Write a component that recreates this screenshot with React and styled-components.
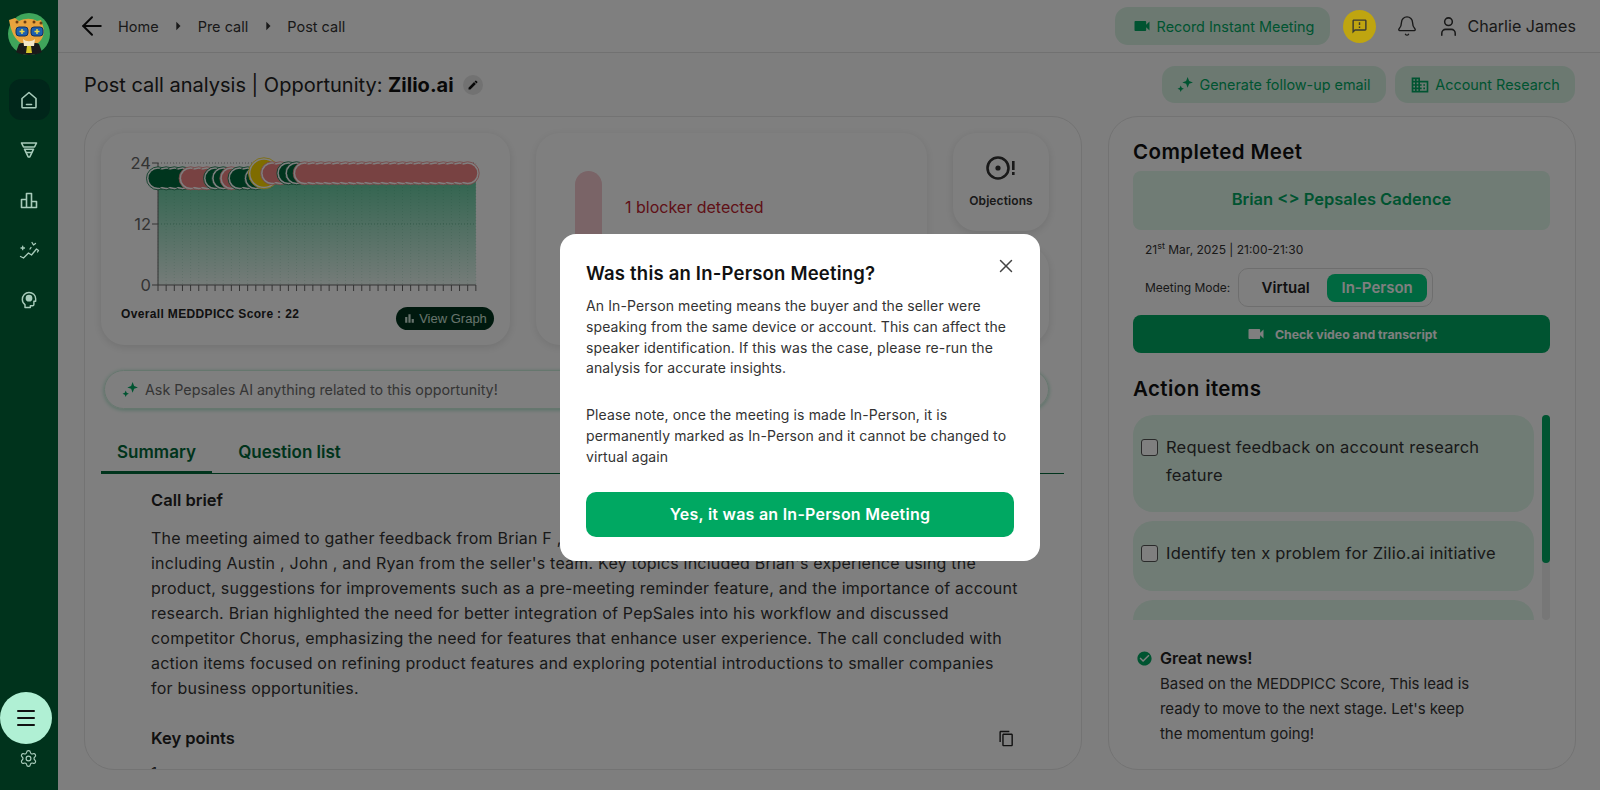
import styled, { createGlobalStyle } from "styled-components";
import { ArrowLeft, Bell, Menu, Settings, User, X } from "lucide-react";
import {
  MdArrowRight,
  MdBarChart,
  MdCheckCircle,
  MdDomain,
  MdEdit,
  MdOutlineContentCopy,
  MdOutlineFeedback,
  MdVideocam,
} from "react-icons/md";

const FONT = `"Inter", "Noto Sans", "Liberation Sans", sans-serif`;
const GREEN = "#00A862";
const PALE = "#E0F8EA";

const Global = createGlobalStyle`
  html, body { margin: 0; height: 100%; background: #fff; overflow: hidden; }
  * { box-sizing: border-box; }
  body { font-family: ${FONT}; color: #222; }
`;

const Page = styled.div`
  display: flex;
  width: 1600px;
  height: 790px;
  overflow: hidden;
`;

const Sidebar = styled.aside`
  position: relative;
  z-index: 20;
  width: 58px;
  flex: none;
  background: #00331c;
  display: flex;
  flex-direction: column;
  align-items: center;
  padding-top: 13px;
`;

const Avatar = styled.svg`
  width: 42px;
  height: 42px;
  margin-bottom: 24px;
`;

const NavItem = styled.div`
  width: 41px;
  height: 41px;
  border-radius: 12px;
  margin-bottom: 9px;
  display: flex;
  align-items: center;
  justify-content: center;
  color: #a8ccbb;
  background: ${(p) => (p.$active ? "#00261a" : "transparent")};
`;

const MenuFab = styled.div`
  position: absolute;
  left: 0;
  top: 692px;
  width: 52px;
  height: 52px;
  border-radius: 50%;
  background: #b0f0d4;
  color: #111;
  display: flex;
  align-items: center;
  justify-content: center;
`;

const Gear = styled.div`
  position: absolute;
  left: 19px;
  top: 749px;
  color: #a8ccbb;
  display: flex;
`;

const Main = styled.main`
  flex: 1;
  min-width: 0;
  background: #fcfcfc;
`;

const TopBar = styled.header`
  height: 53px;
  border-bottom: 1px solid #e2e2e2;
  background: #fff;
  display: flex;
  align-items: center;
  padding: 0 24px 0 19px;
`;

const Crumbs = styled.nav`
  display: flex;
  align-items: center;
  font-size: 14.5px;
  color: #333;
  gap: 12px;
  flex: 1;
`;

const BackIcon = styled.span`
  display: flex;
  margin-right: -1px;
  color: #111;
`;

const Caret = styled.span`
  display: flex;
  color: #333;
  margin: 0 -2.5px;
`;

const PaleButton = styled.button`
  border: none;
  font-family: ${FONT};
  background: #d8f3e3;
  color: ${GREEN};
  display: flex;
  align-items: center;
  justify-content: center;
  gap: 5px;
  border-radius: 13px;
  font-size: 14.4px;
  height: ${(p) => p.$h || 37}px;
  width: ${(p) => p.$w}px;
  padding: 0;
`;

const AlertDot = styled.div`
  position: relative;
  z-index: 11;
  width: 33px;
  height: 33px;
  margin-left: 13px;
  border-radius: 50%;
  background: #bfa510;
  color: #3a3a30;
  display: flex;
  align-items: center;
  justify-content: center;
`;

const HeadIcon = styled.span`
  display: flex;
  color: #333;
  margin-left: ${(p) => p.$ml}px;
`;

const UserName = styled.span`
  margin-left: 7px;
  font-size: 16.1px;
  color: #333;
`;

const TitleRow = styled.div`
  height: 63px;
  padding: 0 25px 0 26px;
  display: flex;
  align-items: center;
`;

const PageTitle = styled.h1`
  margin: 0;
  font-size: 20px;
  font-weight: 400;
  color: #222;
  b {
    font-weight: 700;
    color: #111;
  }
`;

const EditDot = styled.span`
  width: 20px;
  height: 20px;
  border-radius: 50%;
  margin-left: 9px;
  background: #e4e4e4;
  color: #111;
  display: flex;
  align-items: center;
  justify-content: center;
`;

const TitleActions = styled.div`
  margin-left: auto;
  display: flex;
  gap: 9px;
`;

const Columns = styled.div`
  display: flex;
  gap: 26px;
  padding: 0 24px 0 26px;
`;

const LeftPanel = styled.section`
  width: 998px;
  height: 654px;
  flex: none;
  border: 1px solid #e6e6e6;
  border-radius: 30px;
  padding: 16px 0 0 16px;
  overflow: hidden;
  background: #fff;
`;

const TopCards = styled.div`
  display: flex;
  gap: 26px;
  height: 212px;
`;

const ChartCard = styled.div`
  width: 409px;
  border-radius: 24px;
  box-shadow: 0 2px 10px rgba(0, 0, 0, 0.12);
  padding: 17px 16px 0 20px;
  display: flex;
  flex-direction: column;
`;

const ChartSvg = styled.svg`
  width: 370px;
  height: 155px;
  margin-left: 4px;
  display: block;
`;

const ChartFoot = styled.div`
  display: flex;
  justify-content: space-between;
  align-items: flex-start;
  margin-top: 2px;
`;

const ScoreLabel = styled.span`
  font-family: "Liberation Sans", sans-serif;
  font-size: 12px;
  line-height: 14px;
  font-weight: 700;
  letter-spacing: 0.35px;
  color: #222;
`;

const GraphPill = styled.span`
  width: 98px;
  height: 23px;
  border-radius: 12px;
  background: #00331c;
  color: #cfe6da;
  font-family: "Liberation Sans", sans-serif;
  font-size: 13px;
  display: flex;
  align-items: center;
  justify-content: center;
  gap: 3px;
`;

const BlockerCard = styled.div`
  width: 391px;
  border-radius: 24px;
  box-shadow: 0 2px 10px rgba(0, 0, 0, 0.1);
  padding: 38px 0 0 39px;
  display: flex;
  gap: 23px;
`;

const BlockerBar = styled.div`
  width: 27px;
  height: 150px;
  border-radius: 14px;
  background: #f5c8cf;
`;

const BlockerText = styled.span`
  font-size: 16px;
  color: #c0222e;
  margin-top: 26px;
`;

const SideCards = styled.div`
  display: flex;
  flex-direction: column;
  gap: 15px;
  width: 96px;
`;

const SideCard = styled.div`
  height: 98px;
  border-radius: 24px;
  box-shadow: 0 2px 10px rgba(0, 0, 0, 0.12);
  display: flex;
  flex-direction: column;
  align-items: center;
  gap: 12px;
  padding-top: 22px;
  font-size: 12px;
  letter-spacing: 0.1px;
  font-weight: 600;
  color: #333;
`;

const AskBar = styled.div`
  width: 945px;
  height: 39px;
  margin: 25px 0 0 3px;
  border: 1px solid #cdeedd;
  border-radius: 20px;
  box-shadow: 0 1px 4px rgba(0, 168, 98, 0.35);
  display: flex;
  align-items: center;
  gap: 6px;
  padding-left: 17px;
  font-size: 14.3px;
  color: #6b6b6b;
`;

const Tabs = styled.div`
  display: flex;
  width: 963px;
  height: 44px;
  margin-top: 21px;
  border-bottom: 1px solid #006838;
`;

const Tab = styled.div`
  width: ${(p) => p.$w}px;
  font-size: 17px;
  font-weight: 600;
  color: #006838;
  text-align: center;
  padding-top: 12px;
  height: 44px;
  border-bottom: ${(p) => (p.$active ? "3px solid #006838" : "none")};
`;

const Summary = styled.div`
  padding-left: 50px;
  width: 914px;
`;

const SubHead = styled.div`
  display: flex;
  justify-content: space-between;
  align-items: center;
  font-size: 16.5px;
  font-weight: 600;
  line-height: 25px;
  color: #222;
  margin-top: ${(p) => p.$mt}px;
`;

const Brief = styled.p`
  margin: 13px 0 0;
  font-size: 16px;
  letter-spacing: 0.22px;
  line-height: 25px;
  color: #333;
  white-space: nowrap;
  span {
    display: block;
  }
`;

const KeyList = styled.div`
  font-size: 15px;
  line-height: 25px;
  margin-top: 9px;
  color: #333;
`;

const RightPanel = styled.section`
  width: 468px;
  height: 654px;
  flex: none;
  border: 1px solid #e6e6e6;
  border-radius: 30px;
  padding: 22px 25px 0 24px;
  background: #fff;
`;

const PanelHead = styled.h2`
  margin: ${(p) => p.$mt || 0}px 0 0;
  font-size: 20.5px;
  letter-spacing: 0.4px;
  line-height: 26px;
  font-weight: 600;
  color: #111;
`;

const MeetName = styled.div`
  height: 59px;
  margin-top: 6px;
  padding-bottom: 4px;
  border-radius: 8px;
  background: ${PALE};
  color: ${GREEN};
  font-size: 16.5px;
  font-weight: 600;
  display: flex;
  align-items: center;
  justify-content: center;
`;

const MeetDate = styled.div`
  margin: 12px 0 0 12px;
  font-size: 12px;
  line-height: 16px;
  color: #333;
  sup {
    font-size: 9px;
    line-height: 0;
  }
`;

const ModeRow = styled.div`
  display: flex;
  align-items: center;
  margin: 10px 0 0 12px;
  font-size: 12px;
  color: #333;
  gap: 8px;
`;

const ModeToggle = styled.div`
  width: 195px;
  height: 39px;
  border: 1px solid #ddd;
  border-radius: 10px;
  padding: 5px;
  display: flex;
  align-items: center;
`;

const ModeOption = styled.span`
  height: 28px;
  width: ${(p) => p.$w}px;
  border-radius: 8px;
  font-size: 15px;
  font-weight: 600;
  display: flex;
  align-items: center;
  justify-content: center;
  background: ${(p) => (p.$on ? "#00d080" : "transparent")};
  color: ${(p) => (p.$on ? "#fff" : "#222")};
`;

const VideoButton = styled.div`
  height: 38px;
  margin-top: 8px;
  border-radius: 8px;
  background: ${GREEN};
  color: #fff;
  display: flex;
  align-items: center;
  justify-content: center;
  gap: 9px;
  font-size: 12.3px;
  font-weight: 700;
`;

const ActionWrap = styled.div`
  display: flex;
  justify-content: space-between;
  height: 205px;
  margin-top: 13px;
`;

const ActionList = styled.div`
  width: 401px;
  overflow: hidden;
  display: flex;
  flex-direction: column;
  gap: 9px;
`;

const ActionItem = styled.div`
  flex: none;
  height: ${(p) => p.$h}px;
  border-radius: 20px;
  background: ${PALE};
  padding: 18px 8px 0 8px;
  display: flex;
  gap: 8px;
  font-size: 16.5px;
  letter-spacing: 0.2px;
  line-height: 28px;
  color: #333;
`;

const Check = styled.span`
  flex: none;
  width: 17px;
  height: 17px;
  margin-top: 6px;
  border: 1.5px solid #555;
  border-radius: 3px;
  background: #fff;
`;

const ScrollTrack = styled.div`
  width: 8px;
  border-radius: 4px;
  background: #eee;
`;

const ScrollThumb = styled.div`
  height: 148px;
  border-radius: 4px;
  background: ${GREEN};
`;

const News = styled.div`
  display: flex;
  gap: 7px;
  margin: 26px 0 0 3px;
  font-size: 15px;
  letter-spacing: -0.05px;
  line-height: 25px;
  color: #333;
  b {
    font-size: 16px;
    font-weight: 600;
    color: #222;
  }
`;

const NewsIcon = styled.span`
  color: ${GREEN};
  display: flex;
  margin-top: 4px;
`;

const Overlay = styled.div`
  position: fixed;
  inset: 0;
  z-index: 10;
  background: rgba(0, 0, 0, 0.5);
  display: flex;
  align-items: flex-start;
  justify-content: center;
  padding-top: 234px;
`;

const Modal = styled.div`
  position: relative;
  width: 480px;
  height: 327px;
  border-radius: 16px;
  background: #fff;
  padding: 26px 26px 0;
`;

const ModalTitle = styled.h3`
  margin: 0;
  font-size: 18.5px;
  letter-spacing: 0.2px;
  line-height: 26px;
  font-weight: 600;
  color: #111;
`;

const CloseBtn = styled.span`
  position: absolute;
  right: 23px;
  top: 21px;
  color: #444;
  display: flex;
`;

const ModalText = styled.p`
  margin: ${(p) => p.$mt}px 0 0;
  font-size: 14px;
  letter-spacing: 0.11px;
  line-height: 20.8px;
  color: #333;
  white-space: nowrap;
  span {
    display: block;
  }
`;

const ConfirmBtn = styled.div`
  height: 45px;
  margin-top: 24px;
  border-radius: 10px;
  background: ${GREEN};
  color: #fff;
  font-size: 16px;
  letter-spacing: 0.25px;
  font-weight: 600;
  display: flex;
  align-items: center;
  justify-content: center;
`;

const Sparkle = ({ size = 16, color = GREEN }) => (
  <svg width={size} height={size} viewBox="0 0 16 16" fill={color}>
    <path d="M10 1l1.400 3.600L15 6l-3.600 1.400L10 11 8.600 7.400 5 6l3.600-1.400z" />
    <path d="M3.500 9l.9 2.100 2.100.9-2.100.9-.9 2.100-.9-2.100L.5 12l2.100-.9z" />
  </svg>
);

const line = { fill: "none", stroke: "currentColor", strokeWidth: 1.6, strokeLinecap: "round", strokeLinejoin: "round" };

const HomeIcon = () => (
  <svg width="18" height="18" viewBox="0 0 18 18" {...line}>
    <path d="M2 7.500L9 1.500l7 6V16a.8.8 0 0 1-.8.8H2.800A.8.8 0 0 1 2 16z" />
    <path d="M6.500 13.500h5" />
  </svg>
);

const FunnelIcon = () => (
  <svg width="18" height="18" viewBox="0 0 18 18" {...line}>
    <path d="M1.500 2h15l-2 4h-11z" />
    <path d="M4.500 8.200h9L9.800 16h-1.600z" />
    <path d="M6.500 11.500h5" />
  </svg>
);

const BarsIcon = () => (
  <svg width="18" height="18" viewBox="0 0 18 18" {...line}>
    <path d="M1.500 16.500v-8h5v8zM6.500 16.500v-14h5v14zM11.500 16.500v-6h5v6z" />
  </svg>
);

const TrendIcon = () => (
  <svg width="21" height="18" viewBox="0 0 21 18" {...line} strokeWidth={1.3}>
    <path d="M1.500 15.500l3 1.500 5-5 3 2 5-6 2 1.500-1 1.500" />
    <path d="M2 7h3.500M3.700 5.200v3.500M13 1.500l1.500 2.500 2-1.500M11 8l1-1.500" />
  </svg>
);

const BrainIcon = () => (
  <svg width="16" height="18" viewBox="0 0 18 20" {...line}>
    <path d="M4.500 18.500v-3.200C2.600 14 1.500 12 1.500 9.500 1.500 5 4.800 1.500 9 1.500s7.500 3.200 7.500 7.200v2.800h-2v3.500a1.500 1.500 0 0 1-1.500 1.500h-2.500v2z" />
    <circle cx="9" cy="8" r="3" fill="currentColor" />
  </svg>
);

const ObjectionIcon = () => (
  <svg width="30" height="26" viewBox="0 0 30 26">
    <circle cx="12" cy="13" r="10.500" fill="none" stroke="#333" strokeWidth="2.600" />
    <circle cx="12" cy="13" r="2.600" fill="#333" />
    <rect x="26" y="6" width="2.600" height="9" fill="#333" />
    <rect x="26" y="17" width="2.600" height="3" fill="#333" />
  </svg>
);

const DARK = "#006b3c";
const RED = "#f08585";
const YELLOW = "#ffd800";

const OX = 33;
const OY = 13;
const STEP = 8.15;
const AXIS_BOTTOM = OY + 122;

// runs of score points, painted left to right: ring first, then fill,
// so a run reads as one solid band and only its left edge shows a ring
const RUNS = [
  { from: 0, to: 3, color: DARK, score: 21 },
  { from: 4, to: 6, color: RED, score: 21 },
  { from: 7, to: 7, color: DARK, score: 21 },
  { from: 8, to: 8, color: DARK, score: 21 },
  { from: 9, to: 9, color: RED, score: 21 },
  { from: 10, to: 11, color: DARK, score: 21 },
  { from: 12, to: 12, color: DARK, score: 21 },
  { from: 13, to: 13, color: YELLOW, score: 22, big: true },
  { from: 14, to: 15, color: RED, score: 22 },
  { from: 16, to: 16, color: DARK, score: 22 },
  { from: 17, to: 17, color: DARK, score: 22 },
  { from: 18, to: 38, color: RED, score: 22 },
];

const scoreY = (score) => OY + 122 - score * 5.08;
const pointX = (i) => OX + i * STEP;
const LAST_X = pointX(39);

const RunDots = ({ run }) => {
  const xs = [];
  for (let i = run.from; i <= run.to; i++) xs.push(pointX(i));
  const y = scoreY(run.score);
  const r = run.big ? 14 : 10;
  return (
    <g>
      {xs.map((x) => (
        <circle key={x} cx={x} cy={y} r={r + 1.5} fill="#fff" stroke={run.color} strokeWidth="0.8" />
      ))}
      {xs.map((x) => (
        <circle key={x} cx={x} cy={y} r={r - 0.5} fill={run.color} />
      ))}
    </g>
  );
};

const TICKS = Array.from({ length: 40 }, (_, i) => pointX(i));

const ScoreChart = () => (
  <ChartSvg viewBox="0 0 370 155">
    <defs>
      <linearGradient id="area" x1="0" y1="0" x2="0" y2="1">
        <stop offset="0" stopColor="#00a862" stopOpacity="0.62" />
        <stop offset="1" stopColor="#00a862" stopOpacity="0.08" />
      </linearGradient>
    </defs>
    <path d={`M${OX} ${AXIS_BOTTOM}V${scoreY(21)}H${LAST_X}V${AXIS_BOTTOM}Z`} fill="url(#area)" />
    {TICKS.map((x) => (
      <line key={x} x1={x} x2={x} y1={OY} y2={AXIS_BOTTOM} stroke="#0068381f" strokeDasharray="1 2" />
    ))}
    <line x1={OX} x2={LAST_X} y1={OY} y2={OY} stroke="#999" strokeDasharray="1 2" />
    <line x1={OX} x2={LAST_X} y1={OY + 61} y2={OY + 61} stroke="#00683855" strokeDasharray="1 2" />
    <path d={`M${OX} ${OY}V${AXIS_BOTTOM}H${LAST_X}`} fill="none" stroke="#666" />
    {TICKS.map((x) => (
      <line key={x} x1={x} x2={x} y1={AXIS_BOTTOM} y2={AXIS_BOTTOM + 6} stroke="#666" />
    ))}
    {[[OY, "24"], [OY + 61, "12"], [AXIS_BOTTOM, "0"]].map(([y, t]) => (
      <g key={t}>
        <line x1={OX - 6} x2={OX} y1={y} y2={y} stroke="#666" />
        <text x={OX - 7} y={y + 6} fontSize="16.5" textAnchor="end" fill="#666" fontFamily={FONT}>
          {t}
        </text>
      </g>
    ))}
    {RUNS.map((run) => (
      <RunDots key={run.from} run={run} />
    ))}
  </ChartSvg>
);

const BRIEF = [
  "The meeting aimed to gather feedback from Brian F , a current user of the product, in a call",
  "including Austin , John , and Ryan from the seller's team. Key topics included Brian's experience using the",
  "product, suggestions for improvements such as a pre-meeting reminder feature, and the importance of account",
  "research. Brian highlighted the need for better integration of PepSales into his workflow and discussed",
  "competitor Chorus, emphasizing the need for features that enhance user experience. The call concluded with",
  "action items focused on refining product features and exploring potential introductions to smaller companies",
  "for business opportunities.",
];

const AvatarLogo = () => (
  <Avatar viewBox="0 0 42 42">
    <circle cx="21" cy="21" r="21" fill="#3fa55b" />
    <path d="M1 7l6-2 4 3c6-3 13-3 18 0l4-1 2 6c2 7 0 13-5 17H13C7 27 3 19 1 7z" fill="#e8a33d" />
    <path d="M11 31c3-2 17-2 20 0l3 8c-6 4-20 4-26 0z" fill="#1a1a1a" />
    <path d="M15 26c3 3 9 3 12 0l-1 7H16z" fill="#f3e6c8" />
    <path d="M19 33h4l1 7h-6z" fill="#d6c62b" />
    <rect x="8" y="14" width="12" height="9" rx="3" fill="#1d5fae" stroke="#10305e" />
    <rect x="23" y="14" width="12" height="9" rx="3" fill="#1d5fae" stroke="#10305e" />
    <path d="M14 16v5M11.500 18.500h5M29 16v5M26.500 18.500h5" stroke="#e9d84a" strokeWidth="1.500" />
    <circle cx="9" cy="9" r="1.500" fill="#6b3d12" />
    <circle cx="17" cy="9" r="1.500" fill="#6b3d12" />
    <circle cx="26" cy="9" r="1.500" fill="#6b3d12" />
    <circle cx="33" cy="10" r="1.500" fill="#6b3d12" />
  </Avatar>
);

export default function App() {
  return (
    <Page>
      <Global />
      <Sidebar>
        <AvatarLogo />
        <NavItem $active><HomeIcon /></NavItem>
        <NavItem><FunnelIcon /></NavItem>
        <NavItem><BarsIcon /></NavItem>
        <NavItem><TrendIcon /></NavItem>
        <NavItem><BrainIcon /></NavItem>
        <MenuFab><Menu size={24} strokeWidth={2} /></MenuFab>
        <Gear><Settings size={19} strokeWidth={1.5} /></Gear>
      </Sidebar>
      <Main>
        <TopBar>
          <Crumbs>
            <BackIcon><ArrowLeft size={30} strokeWidth={1.6} /></BackIcon>
            Home
            <Caret><MdArrowRight size={20} /></Caret>
            Pre call
            <Caret><MdArrowRight size={20} /></Caret>
            Post call
          </Crumbs>
          <PaleButton $w={215} $h={38}>
            <MdVideocam size={20} />
            Record Instant Meeting
          </PaleButton>
          <AlertDot><MdOutlineFeedback size={17} /></AlertDot>
          <HeadIcon $ml={20}><Bell size={22} strokeWidth={1.5} /></HeadIcon>
          <HeadIcon $ml={19}><User size={23} strokeWidth={1.6} /></HeadIcon>
          <UserName>Charlie James</UserName>
        </TopBar>
        <TitleRow>
          <PageTitle>
            Post call analysis | Opportunity: <b>Zilio.ai</b>
          </PageTitle>
          <EditDot><MdEdit size={12} /></EditDot>
          <TitleActions>
            <PaleButton $w={224}>
              <Sparkle size={17} />
              Generate follow-up email
            </PaleButton>
            <PaleButton $w={180}>
              <MdDomain size={20} />
              Account Research
            </PaleButton>
          </TitleActions>
        </TitleRow>
        <Columns>
          <LeftPanel>
            <TopCards>
              <ChartCard>
                <ScoreChart />
                <ChartFoot>
                  <ScoreLabel>Overall MEDDPICC Score : 22</ScoreLabel>
                  <GraphPill>
                    <MdBarChart size={13} />
                    View Graph
                  </GraphPill>
                </ChartFoot>
              </ChartCard>
              <BlockerCard>
                <BlockerBar />
                <BlockerText>1 blocker detected</BlockerText>
              </BlockerCard>
              <SideCards>
                <SideCard>
                  <ObjectionIcon />
                  Objections
                </SideCard>
                <SideCard />
              </SideCards>
            </TopCards>
            <AskBar>
              <Sparkle size={17} />
              Ask Pepsales AI anything related to this opportunity!
            </AskBar>
            <Tabs>
              <Tab $active $w={111}>Summary</Tab>
              <Tab $w={155}>Question list</Tab>
            </Tabs>
            <Summary>
              <SubHead $mt={14}>Call brief</SubHead>
              <Brief>
                {BRIEF.map((t) => (
                  <span key={t}>{t}</span>
                ))}
              </Brief>
              <SubHead $mt={25}>
                Key points
                <MdOutlineContentCopy size={17} color="#222" />
              </SubHead>
              <KeyList>1.</KeyList>
            </Summary>
          </LeftPanel>
          <RightPanel>
            <PanelHead>Completed Meet</PanelHead>
            <MeetName>Brian &lt;&gt; Pepsales Cadence</MeetName>
            <MeetDate>
              21<sup>st</sup> Mar, 2025 | 21:00-21:30
            </MeetDate>
            <ModeRow>
              Meeting Mode:
              <ModeToggle>
                <ModeOption $w={84}>Virtual</ModeOption>
                <ModeOption $w={102} $on>In-Person</ModeOption>
              </ModeToggle>
            </ModeRow>
            <VideoButton>
              <MdVideocam size={20} />
              Check video and transcript
            </VideoButton>
            <PanelHead $mt={23}>Action items</PanelHead>
            <ActionWrap>
              <ActionList>
                <ActionItem $h={97}>
                  <Check />
                  <span>
                    Request feedback on account research
                    <br />
                    feature
                  </span>
                </ActionItem>
                <ActionItem $h={70}>
                  <Check />
                  <span>Identify ten x problem for Zilio.ai initiative</span>
                </ActionItem>
                <ActionItem $h={60} />
              </ActionList>
              <ScrollTrack><ScrollThumb /></ScrollTrack>
            </ActionWrap>
            <News>
              <NewsIcon><MdCheckCircle size={17} /></NewsIcon>
              <div>
                <b>Great news!</b>
                <br />
                Based on the MEDDPICC Score, This lead is
                <br />
                ready to move to the next stage. Let's keep
                <br />
                the momentum going!
              </div>
            </News>
          </RightPanel>
        </Columns>
      </Main>
      <Overlay>
        <Modal>
          <ModalTitle>Was this an In-Person Meeting?</ModalTitle>
          <CloseBtn><X size={22} strokeWidth={1.6} /></CloseBtn>
          <ModalText $mt={10}>
            <span>An In-Person meeting means the buyer and the seller were</span>
            <span>speaking from the same device or account. This can affect the</span>
            <span>speaker identification. If this was the case, please re-run the</span>
            <span>analysis for accurate insights.</span>
          </ModalText>
          <ModalText $mt={26}>
            <span>Please note, once the meeting is made In-Person, it is</span>
            <span>permanently marked as In-Person and it cannot be changed to</span>
            <span>virtual again</span>
          </ModalText>
          <ConfirmBtn>Yes, it was an In-Person Meeting</ConfirmBtn>
        </Modal>
      </Overlay>
    </Page>
  );
}
